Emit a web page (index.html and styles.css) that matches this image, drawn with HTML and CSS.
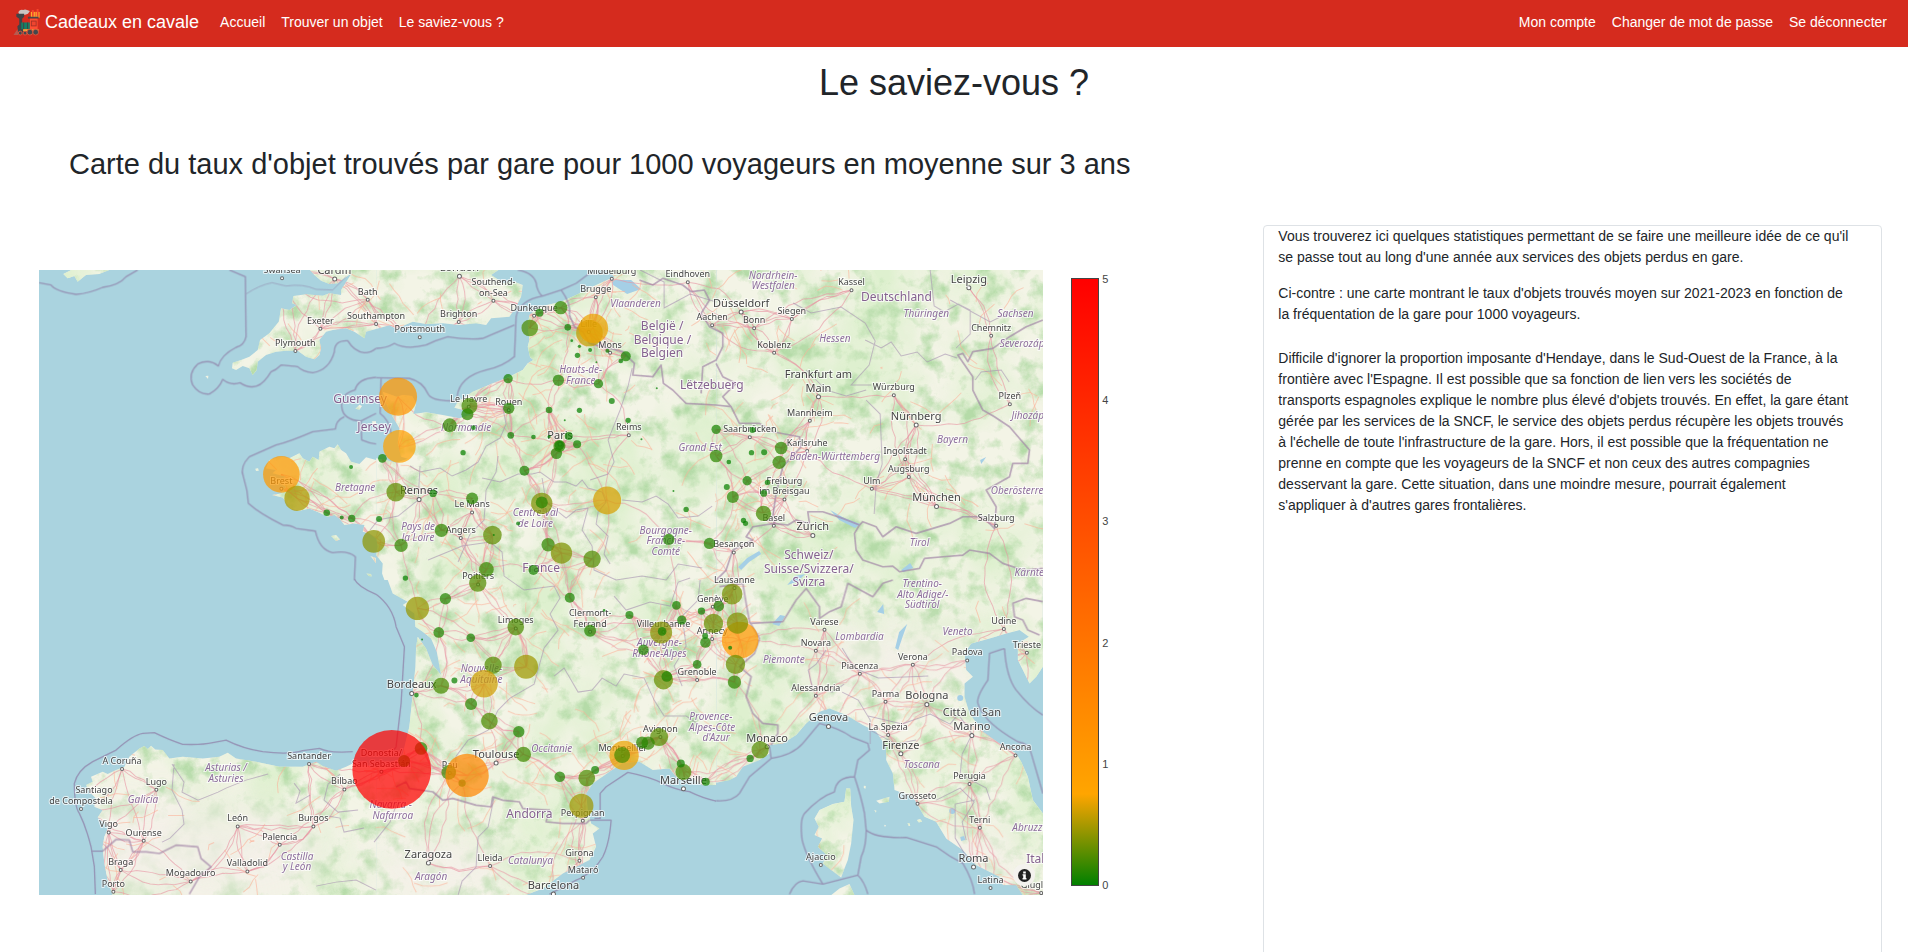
FILE: index.html
```html
<!DOCTYPE html>
<html lang="fr">
<head>
<meta charset="utf-8">
<title>Cadeaux en cavale</title>
<link rel="stylesheet" href="styles.css">
</head>
<body>
<nav class="navbar">
  <a class="brand" href="#">
    <svg class="brand-logo" viewBox="0 0 28 28" aria-hidden="true">
      <path d="M5 3q2-3 5-2 2-1 4 0l3 1-2 3-3 1H6z" fill="#c9c5c3"/>
      <path d="M18 3h9v6h-9z" fill="#ffc32b"/><path d="M19 1h2v7h-2zM22 3h1v5h-1zM24 0h2v8h-2z" fill="#f5442d"/>
      <path d="M3 5h8v3L9 10v6h1v10H5l-1-8 2-2v-6L3 8z" fill="#3f4448"/>
      <path d="M8 14h9v7H8z" fill="#168064"/><path d="M10 14h1v7h-1zM14 14h1v7h-1z" fill="#3f4448"/>
      <path d="M15 8h11v2H15z" fill="#4a4648"/><path d="M17 10h8v11h-8z" fill="#ff4e32"/>
      <path d="M18 12h6v6h-6z" fill="#a83226"/><path d="M19 13h4v4h-4z" fill="#f0452f"/>
      <path d="M10 21h16v2H10z" fill="#f2b13a"/><path d="M4 21L0 27h5z" fill="#b85a50"/>
      <g fill="#44484c" stroke="#d9573e"><circle cx="7" cy="25" r="2"/><circle cx="12" cy="25" r="2"/><circle cx="17" cy="24" r="3"/><circle cx="23" cy="24" r="3"/></g>
    </svg>
    <span>Cadeaux en cavale</span>
  </a>
  <div class="nav-group">
    <a class="nav-link" href="#">Accueil</a>
    <a class="nav-link" href="#">Trouver un objet</a>
    <a class="nav-link" href="#">Le saviez-vous ?</a>
  </div>
  <div class="nav-group nav-account">
    <a class="nav-link" href="#">Mon compte</a>
    <a class="nav-link" href="#">Changer de mot de passe</a>
    <a class="nav-link" href="#">Se déconnecter</a>
  </div>
</nav>
<main class="page">
  <h1 class="page-title">Le saviez-vous ?</h1>
  <h2 class="section-title">Carte du taux d'objet trouvés par gare pour 1000 voyageurs en moyenne sur 3 ans</h2>
  <div class="columns">
    <section class="chart" aria-label="Carte des gares">
      <div class="map">
        <svg class="map-canvas" viewBox="39 270 1004 625" role="img" aria-label="Taux d'objets trouvés par gare">
          <defs>
            <filter id="forest" x="0" y="0" width="1" height="1" color-interpolation-filters="sRGB">
              <feTurbulence type="fractalNoise" baseFrequency="0.05" numOctaves="6" seed="8"/>
              <feColorMatrix values="0 0 0 0 0.71  0 0 0 0 0.86  0 0 0 0 0.66  3 0 0 0 -1.4"/>
            </filter>
            <filter id="plain" x="0" y="0" width="1" height="1" color-interpolation-filters="sRGB">
              <feTurbulence type="fractalNoise" baseFrequency="0.012" numOctaves="4" seed="21"/>
              <feColorMatrix values="0 0 0 0 0.87  0 0 0 0 0.94  0 0 0 0 0.81  0 3 0 0 -1.2"/>
            </filter>
            <filter id="soft"><feGaussianBlur stdDeviation="20"/></filter>
            <g id="land">
              <svg x="36" y="260" width="340" height="320" viewBox="0 0 1020 960">
                <path d="M110 28L82 42 95 55 115 48 125 65 150 45 190 42 225 28z"/>
                <path d="M820 28L835 45 855 62 880 72 905 70 925 55 948 38 930 66 915 90 915 105 880 100 860 107 810 103 772 108 768 130 782 135 760 150 735 145 728 185 712 205 700 220 672 240 665 270 640 290 615 300 590 308 588 325 600 330 620 318 640 325 650 345 662 330 665 305 690 285 720 275 750 272 785 272 810 290 835 298 850 285 855 265 850 240 870 215 890 210 930 205 955 215 985 235 990 215 1020 207V28z"/>
                <path d="M1020 600L990 592 970 612 945 605 930 580 915 570 905 553 895 565 880 560 850 575 848 600 830 590 820 605 800 595 790 580 760 595 735 590 700 600 690 625 720 630 710 640 750 650 725 665 750 680 735 700 708 705 740 712 765 745 790 752 820 745 850 758 875 770 895 765 910 775 925 795 955 790 985 795 980 815 1000 820 1020 835z"/>
                <path d="M885 828l15-3 12 13-12 5zM958 446l12-12 8 4-8 11zM508 348l9-1-1 10zM658 626l8-1 2 7-8 1zM1008 484h12v12h-10zM1003 888l17 6v16zM991 940l14 2 2 7-9-1z"/>
              </svg>
              <svg x="376" y="260" width="340" height="320" viewBox="0 0 1020 960">
                <path d="M0 28V207L40 196 60 206 110 185 150 192 200 190 250 195 300 190 330 195 345 175 400 170 420 140 435 110 440 75 415 65 380 70 360 55 345 45 370 28z"/>
                <path d="M690 28L715 50 660 75 600 105 555 125 490 140 460 165 455 195 460 240 455 260 462 292 472 300 455 310 440 330 400 350 350 370 290 395 245 425 235 443 270 452 287 463 250 475 200 465 150 457 112 462 120 430 108 408 80 405 62 410 20 395 30 430 50 470 70 505 65 550 75 590 95 596 60 608 30 600 0 595V830L5 860 0 885 20 910 18 940 25 960H1020V28z"/>
              </svg>
              <svg x="716" y="260" width="340" height="320" viewBox="0 0 1020 960"><path d="M0 0H1020V960H0z"/></svg>
              <svg x="36" y="580" width="340" height="320" viewBox="0 0 1020 960">
                <path d="M235 960L215 900 205 850 200 800 205 770 218 740 185 712 200 690 175 680 180 655 160 635 150 615 170 605 165 590 200 575 215 582 240 570 265 560 280 530 310 505 325 498 335 507 345 497 358 508 380 510 400 535 440 530 500 535 550 530 575 518 600 535 660 545 730 560 800 560 840 545 860 558 900 572 930 560 950 550 1020 560V960z"/>
              </svg>
              <svg x="376" y="580" width="340" height="320" viewBox="0 0 1020 960">
                <path d="M35 0L50 40 95 65 80 75 115 100 118 140 140 155 165 175 182 215 195 285 170 255 150 205 125 170 120 200 118 260 110 340 100 440 80 520 60 545 0 560V960H410L500 925 560 880 640 840 660 800 650 760 670 745 645 730 635 690 630 640 650 610 700 575 740 548 790 545 830 570 880 565 900 590 950 595 980 615 1020 615V0z"/>
              </svg>
              <svg x="716" y="580" width="340" height="320" viewBox="0 0 1020 960">
                <path d="M0 608L40 600 60 590 80 560 130 540 160 520 160 495 200 490 240 465 270 430 310 395 340 385 390 405 440 435 480 455 510 500 510 540 530 580 535 630 590 650 625 710 660 725 690 775 740 810 780 855 850 890 860 915 900 915 930 960H1020V740L980 700 950 660 935 590 915 545 900 520 850 490 800 455 760 400 745 350 745 310 770 290 750 270 745 220 765 190 820 175 870 160 910 150 938 170 905 190 905 240 940 310 960 290 980 260V0H0z"/>
                <path d="M390 625L402 625 405 680 412 720 405 790 395 840 385 865 375 892 345 870 320 850 332 825 305 800 318 775 295 765 308 740 295 715 310 690 350 672 385 665zM345 945L370 925 400 912 415 945zM480 662L500 656 520 650 518 665 490 670zM602 720l10-3 6 7-10 3zM574 729l7 1 1 8-5-1zM474 690l7 2-2 6zM504 734l6 2-4 5zM443 617l6 1-1 8-5-2z"/>
              </svg>
            </g>
            <mask id="land-mask"><use href="#land" fill="#fff"/></mask>
          </defs>
          <rect class="sea" x="39" y="270" width="1004" height="625"/>
          <use class="land" href="#land"/>
          <g mask="url(#land-mask)">
            <rect x="39" y="270" width="1004" height="625" filter="url(#plain)"/>
            <rect x="39" y="270" width="1004" height="625" filter="url(#forest)"/>
            <g class="dry" filter="url(#soft)">
              <ellipse cx="180" cy="850" rx="150" ry="50"/><ellipse cx="440" cy="865" rx="70" ry="30"/><ellipse cx="890" cy="655" rx="100" ry="25"/><ellipse cx="975" cy="860" rx="40" ry="30"/>
            </g>
            <g class="lakes">
              <path d="M738 567l9-9 12-7 2 3-12 8-8 8zM830 510l14 8 16 6-5 4-16-8zM787 585l8-9 10-2-8 8zM772 624l8-9 5 1-6 10zM895 648l4-16 8-8-5 14-4 12zM877 612l6-8 1 10zM901 570l9-7 3 5-10 4zM957 698a3 3 0 1 0 6 0 3 3 0 1 0-6 0zM949 811a3 3 0 1 0 6 0 3 3 0 1 0-6 0zM960 837l4-1 1 4-4 1zM980 460l6-3-5 7z"/>
              <path d="M611 280l20 0 10 9-14 5-14-9z"/>
            </g>
            <g id="roads"></g>
          </g>
          <g class="region-line">
            <path d="M482 478l18 4 18-8 14 0 8-2 14 10 12 0 10 4 6-6 6 8 14 4 4 10-8 10-2 12 12 12-4 18 6 10M590 480l18-6 6-12-6-22 12-30 8-24 4-18M410 466l10 6 20-4 12 8 14-6 12-8 8-16 14-8 6-14-4-20M420 466l-2 34-20 16-20 4-8 10M498 456l-2 16-10 18-2 30-14 14-12 28M542 478l4 24 20 16 10-8 12-2M622 500l20 2 14-6 12 8 10 14 20-2 14-10M588 508l-6 22 10 16 2 24 22 10 26-4 24 4 12-16 24 4"/>
            <path d="M428 560l34-14 28-4 12 10 2 24 20 14 30-4 6 12-10 16 8 16-14 18-10 36-24 14-12 12-10 20-20 10-12 16-2 22M554 676l10-8 14 24 14-2 10-12 14 8 8-12 20 4 10 22 10 16 22 0 24 16M614 596l12 14 24-8 20 4 8-24 12-4M700 580l-2 20-16 16 4 30-12 20 8 20M494 797l-6 30-10 10-2 30-14 14-4 14M398 800l-8 22-16 20"/>
            <path d="M172 764l12 18-2 10 16 8 20-8 8-4 20-8 22-6M174 764l-2 26 10 20 2 14-14 14-8 4M340 774l-12 10-4 16 14 12 20-2M328 816l12 2 4 14 20-4M294 783l6 8-4 12 14-8M316 886l20-4 20-2 20 10"/>
            <path d="M865 340l16 8 10-6 10 14 16-4 10 10 18-8 12 4M793 303l18 10 30-6 24 16 10 18-6 24-18 20 20 0M866 400l14 14 2 50-6 20-2 30M806 370l20 20 20 6 20-6M930 270l4 36 10 6 14-8 12 6 0 24-14 14M975 380l6-8 20-2 8 12M950 300l40 22 20-10M640 270l24 12 0 26 26-14 26 8"/>
            <path d="M826 650l-10 14-8 6 4 16 20 6 12-8M842 692l16 8 12 20 0 24M868 716l34 8 28-10 20 10 8-10 14 20-10 20-2 20 26 14 4 12M870 730l26 14 20-4M928 676l-50 2-24-10-12-20M936 800l24-12 14 14-12 20 4 18M975 800l-20 4 0 34 12 20"/>
          </g>
          <g class="border">
            <g transform="translate(376 260) scale(.33333)"><path d="M580 165L595 200 620 215 640 250 690 262 740 275 775 310 770 345 830 350 855 315 862 370 890 390 930 430 1020 435 1065 440 1090 490 1150 490 1190 515 1270 530 1275 560 1220 620 1200 700 1190 770 1195 790M790 60L830 75 860 55 920 75 945 95 985 90 1000 120 975 160 1000 200 1040 220 1040 260 1020 300 980 320 975 400M1065 440L1040 410 1080 370 1040 350 1020 310"/></g>
            <g transform="translate(716 260) scale(.33333)"><path d="M175 790L215 795 240 780 280 790 275 755 320 755 380 775 430 795 415 820 420 870 440 900 500 920 530 918 550 935 610 925 625 895 680 890 740 885 760 870 820 880 860 910 920 930 980 925M430 795L440 785 480 800 500 830 540 800 600 820 700 790 740 770 800 770 835 805 840 740 810 690 880 650 890 610 935 610 940 570 880 500 835 470 800 450 770 390 770 350 725 285 740 280 755 305 770 275 830 265 880 230 930 200 980 180M175 790L110 800 90 830 110 840 50 870 30 930 0 960"/></g>
            <g transform="translate(376 580) scale(.33333)"><path d="M60 620L90 605 100 625 170 635 200 660 230 655 300 675 345 680 350 650 380 660 430 665 440 685 520 690 510 725 560 730 630 730 640 720"/></g>
            <g transform="translate(716 580) scale(.33333)"><path d="M10 20L80 10 90 70 100 125 130 175 115 220 70 260 105 290 90 350 110 400 140 430 185 435 185 460 165 495M100 130L200 125 240 60 270 25 310 80 310 115 340 95 375 80 395 10 470 50 500 10 530 0M980 65L930 55 890 70 895 110 920 120 935 150 970 165"/></g>
            <g transform="translate(36 580) scale(.33333)"><path d="M200 813L240 778 280 780 290 815 330 815 370 820 420 795 485 800 495 835 525 860 490 890 460 942"/></g>
          </g>
          <g class="waters">
            <g transform="translate(36 260) scale(.33333)"><path d="M9 68L45 75Q60 95 120 103 160 100 200 82 250 75 270 50L305 30M580 30L628 50 630 230Q625 255 600 262 555 285 547 318 520 295 485 312 455 340 470 375 490 405 520 402 550 385 560 358 585 378 612 368 660 400 695 350L705 335Q720 330 735 315 770 318 785 320 800 335 830 338 880 330 895 275 895 240 935 242 955 275 985 278 1005 278 1020 265M1020 352Q965 355 957 390 915 400 917 440 920 480 975 483L1020 460M925 470Q900 480 898 507L830 515Q760 545 720 555L640 590Q610 620 622 650 635 690 637 730 670 760 740 795 765 795 780 805L838 813Q850 870 890 878 935 870 958 890L955 960M975 485L977 540Q1000 550 1020 552"/><path class="thin" d="M630 102Q670 75 708 68L750 78Q800 70 840 88L890 90 930 50"/></g>
            <g transform="translate(376 260) scale(.33333)"><path d="M0 265Q30 265 55 250 90 270 150 255 180 240 215 230 280 240 320 235 380 210 415 195M425 30Q480 40 482 80 490 105 500 108L555 90Q585 130 580 165M555 90L600 70 640 40M500 108Q430 120 420 170L415 290Q380 320 330 330 250 350 243 410M0 353L100 355Q140 365 155 400 165 425 240 422M15 353L12 460Q40 480 45 520"/></g>
            <g transform="translate(36 580) scale(.33333)"><path d="M178 942L175 860 165 800Q150 740 130 700 115 680 115 610 125 570 170 545L240 510Q290 465 320 460L355 458Q400 480 440 493 500 495 530 488L570 480Q620 505 680 515 760 525 800 512L850 505Q880 520 950 515M955 -3Q965 20 1020 43M165 813H200"/></g>
            <g transform="translate(376 580) scale(.33333)"><path d="M0 43Q50 80 60 140L85 200 75 370 60 500Q50 520 0 520M640 720H705Q700 790 680 830 650 880 600 900L520 942M655 715H672V640L690 620 755 577Q820 590 860 610 900 630 940 635 980 655 1020 663"/></g>
            <g transform="translate(716 580) scale(.33333)"><path d="M0 662Q50 665 70 640L100 590 165 535 160 500M165 535Q230 525 260 490L310 430Q370 445 405 470L455 490 460 510 425 540 415 590Q435 650 445 700L450 750Q450 800 435 830L425 885 320 912Q270 830 258 780 250 720 265 700 310 650 355 635 360 590 415 590M450 750Q480 775 570 772L660 800Q700 830 740 850 770 900 775 942M220 942Q235 905 260 902L320 912M425 885Q445 905 455 942M865 205L820 220 815 300Q780 350 785 370 800 420 880 470L905 485Q940 490 945 520L980 640M865 205Q870 290 900 330 940 380 980 405"/></g>
          </g>
          <g id="labels"></g>
          <g id="stations"></g>
        </svg>
        <button class="map-info" type="button" aria-label="Attribution">
          <svg viewBox="0 0 20 20" aria-hidden="true"><circle cx="10" cy="10" r="10" fill="#222"/><path d="M8 4h4v3H8zM7 8h5v6h1v2H7v-2h1v-4H7z" fill="#fff"/></svg>
        </button>
      </div>
      <div class="scale">
        <div class="scale-bar"></div>
        <div class="scale-ticks"><span>5</span><span>4</span><span>3</span><span>2</span><span>1</span><span>0</span></div>
      </div>
    </section>
    <aside class="card">
      <p class="card-text">Vous trouverez ici quelques statistiques permettant de se faire une meilleure idée de ce qu'il<br>se passe tout au long d'une année aux services des objets perdus en gare.</p>
      <p class="card-text">Ci-contre : une carte montrant le taux d'objets trouvés moyen sur 2021-2023 en fonction de<br>la fréquentation de la gare pour 1000 voyageurs.</p>
      <p class="card-text card-note">Difficile d'ignorer la proportion imposante d'Hendaye, dans le Sud-Ouest de la France, à la<br>frontière avec l'Espagne. Il est possible que sa fonction de lien vers les sociétés de<br>transports espagnoles explique le nombre plus élevé d'objets trouvés. En effet, la gare étant<br>gérée par les services de la SNCF, le service des objets perdus récupère les objets trouvés<br>à l'échelle de toute l'infrastructure de la gare. Hors, il est possible que la fréquentation ne<br>prenne en compte que les voyageurs de la SNCF et non ceux des autres compagnies<br>desservant la gare. Cette situation, dans une moindre mesure, pourrait également<br>s'appliquer à d'autres gares frontalières.</p>
    </aside>
  </div>
</main>
<script src="map.js"></script>
</body>
</html>
```
FILE: styles.css
```css
* { box-sizing: border-box; }
body {
  margin: 0;
  background: #fff;
  color: #212529;
  font-family: "Liberation Sans", Arial, sans-serif;
  font-size: 14px;
  line-height: 21px;
}
.navbar {
  display: flex;
  align-items: center;
  min-height: 47px;
  padding: 0 13px 3px;
  background: #d52b1e;
}
.brand {
  display: flex;
  align-items: center;
  gap: 4px;
  margin-right: 13px;
  color: #fff;
  font-size: 18px;
  line-height: 27px;
  text-decoration: none;
}
.brand-logo { width: 28px; height: 27px; }
.nav-group { display: flex; }
.nav-account { margin-left: auto; }
.nav-link { padding: 7px 8px; color: #fff; text-decoration: none; }
.page { padding: 0 26px; }
.page-title {
  margin: 0;
  padding-top: 14px;
  font-size: 36px;
  font-weight: 400;
  line-height: 43px;
  text-align: center;
}
.section-title {
  margin: 0;
  padding: 43px 43px;
  font-size: 29px;
  font-weight: 400;
  line-height: 35px;
}
.columns { display: grid; grid-template-columns: 2fr 1fr; align-items: start; }
.chart {
  display: flex;
  gap: 28px;
  padding: 45px 155px 45px 13px;
}
.map { position: relative; flex: 1; min-width: 0; }
.map-canvas { display: block; width: 100%; height: auto; }
.sea { fill: #aad3df; }
.land { fill: #f3f4e6; }
.dry { fill: #f4efe9; opacity: .8; }
.lakes { fill: #a5cfe6; }
.road { fill: none; stroke: #e892a2; stroke-width: 1; opacity: .6; }
.road.minor { stroke: #fbb29a; opacity: .6; }
.region-line { fill: none; stroke: #a58fb0; stroke-width: 1; opacity: .6; }
.border { fill: none; stroke: #a184a6; stroke-width: 5; stroke-linejoin: round; opacity: .7; }
.waters { fill: none; stroke: #9289ae; stroke-width: 4; stroke-linejoin: round; opacity: .85; }
.waters .thin { stroke-width: 2; }
.place {
  fill: #444;
  stroke: #fff;
  stroke-opacity: .7;
  stroke-width: 2px;
  paint-order: stroke;
  font-family: "Noto Sans", sans-serif;
  font-size: 9px;
  text-anchor: middle;
}
.place.city { font-size: 11px; }
.place.country { fill: #85628f; font-size: 12px; }
.place.area { fill: #8d6e9c; font-size: 10px; font-style: italic; }
.town { fill: #fff; stroke: #666; stroke-width: 1; }
.map-info {
  position: absolute;
  right: 8px;
  bottom: 9px;
  display: grid;
  place-items: center;
  width: 22px;
  height: 22px;
  padding: 0;
  border: 0;
  border-radius: 11px;
  background: #f4f2ee;
}
.map-info svg { width: 13px; height: 13px; }
.scale { display: flex; gap: 3px; padding: 8px 0 9px; }
.scale-bar {
  width: 28px;
  border: 1px solid #444;
  background: linear-gradient(to top, #008000 0, #ffa500 15%, #f00 100%);
}
.scale-ticks {
  display: flex;
  flex-direction: column;
  justify-content: space-between;
  margin: -5px 0;
  color: #444;
  font-size: 11px;
  line-height: 12px;
}
.card {
  min-height: 100vh;
  padding: 0 14px;
  border: 1px solid #dee2e6;
  border-radius: 4px;
}
.card-text { margin: 0 0 15px; }
.card-note { padding-top: 8px; }
```
FILE: map.js
```js
const NS = "http://www.w3.org/2000/svg";

// Origin of each map tile; positions inside a tile are in thirds of a unit.
const TILES = {
  A: [36, 260], B: [376, 260], C: [716, 260],
  D: [36, 580], E: [376, 580], F: [716, 580]
};

// x, y, radius of each station.
const STATIONS = {
  A: [[736,643,55],[783,715,38],[945,621,6],[872,758,10],[917,772,6],[947,775,11],[1013,844,34]],
  B: [[554,143,20],[490,158,12],[461,204,25],[575,202,10],[587,242,4],[610,259,5],[642,270,6],[604,286,8],[694,272,6],[640,219,40],[652,205,44],[749,289,15],[734,303,7],[661,307,3],[396,356,14],[547,361,17],[667,371,14],[66,410,57],[70,559,49],[280,438,24],[274,463,18],[398,445,17],[221,496,21],[292,503,7],[519,450,10],[610,451,8],[707,423,9],[756,481,8],[566,481,3],[842,385,3],[796,538,3],[404,526,10],[472,531,7],[261,578,8],[550,558,18],[550,556,14],[541,580,17],[603,553,12],[578,528,12],[519,530,5],[19,595,13],[445,632,15],[59,696,28],[171,700,11],[288,715,18],[497,730,32],[497,727,18],[693,721,42],[9,777,9],[196,811,20],[75,856,20],[349,825,28],[353,825,3],[426,790,6],[516,854,20],[556,879,32],[648,897,26],[472,930,15],[331,928,22],[88,954,8],[892,693,3],[930,748,8],[878,838,17],[1000,850,17]],
  C: [[0,508,14],[0,588,19],[109,510,9],[195,564,19],[189,607,20],[106,578,8],[144,577,9],[38,606,7],[93,662,14],[154,667,8],[143,700,10],[32,681,9],[50,711,18],[142,760,23],[82,781,8],[88,790,8]],
  E: [[305,9,26],[208,56,17],[124,85,35],[188,157,16],[284,173,13],[419,141,25],[581,53,15],[642,152,18],[684,91,4],[760,105,12],[901,76,13],[917,120,14],[976,93,11],[1012,130,29],[855,157,33],[858,154,13],[802,209,16],[988,187,16],[987,168,9],[963,253,13],[351,255,26],[450,260,36],[324,311,41],[195,317,24],[235,301,9],[121,345,7],[285,372,18],[340,423,25],[428,455,17],[442,523,23],[862,299,29],[872,289,16],[849,471,27],[816,489,20],[798,487,18],[744,526,44],[738,525,24],[657,570,12],[632,594,25],[551,590,16],[616,677,36],[922,576,24],[914,550,12],[989,605,12],[84,543,18],[135,505,19],[47,568,118],[218,577,22],[258,609,11],[273,586,65],[138,178,3]],
  F: [[48,42,31],[8,78,16],[72,180,55],[64,129,32],[42,203,6],[58,253,29],[55,306,20],[132,509,26],[102,535,11]]
};

// text, centre x, centre y, kind.
const PLACES = {
  A: [["Swansea",738,31],["Cardiff",896,33,"city"],["Bath",995,95],["Exeter",853,182],["Plymouth",778,249],["Southampton",1020,168],["Guernsey",972,421,"country"],["Jersey",1014,503,"country"],["Brest",736,662],["Bretagne",957,684,"area"]],
  B: [["London",250,25,"city"],["Southend-",352,66],["on-Sea",352,98],["Brighton",248,162],["Portsmouth",131,208],["Middelburg",707,32],["Eindhoven",935,43],["Brugge",659,88],["Vlaanderen",778,131,"area"],["Dunkerque",474,143],["België /",858,202,"country"],["Belgique /",859,242,"country"],["Belgien",858,282,"country"],["Lille",638,192],["Mons",702,254],["Aachen",1008,172],["Hauts-de-",614,330,"area"],["France",614,362,"area"],["Lëtzebuerg",1007,377,"country"],["Le Havre",278,416],["Rouen",398,427],["Normandie",270,504,"area"],["Paris",552,528,"city"],["Reims",758,502],["Grand Est",972,565,"area"],["Rennes",129,694,"city"],["Le Mans",288,733],["Centre-Val",478,760,"area"],["de Loire",478,792,"area"],["Pays de",126,802,"area"],["la Loire",126,833,"area"],["Angers",254,810],["Bourgogne-",869,812,"area"],["Franche-",869,843,"area"],["Comté",869,875,"area"],["France",495,927,"country"],["Poitiers",306,949]],
  C: [["Nordrhein-",171,48,"area"],["Westfalen",171,79,"area"],["Düsseldorf",75,132,"city"],["Bonn",114,181],["Siegen",227,153],["Kassel",406,67],["Leipzig",758,59,"city"],["Deutschland",541,114,"country"],["Thüringen",630,163,"area"],["Sachsen",898,162,"area"],["Chemnitz",825,203],["Koblenz",174,254],["Hessen",356,238,"area"],["Severozápad",935,251,"area"],["Frankfurt am",307,345,"city"],["Main",307,386,"city"],["Würzburg",533,382],["Plzeň",881,409],["Nürnberg",600,471,"city"],["Mannheim",281,458],["Jihozápad",952,469,"area"],["Saarbrücken",101,508],["Karlsruhe",273,549],["Bayern",709,541,"area"],["Ingolstadt",567,574],["Baden-Württemberg",356,590,"area"],["Augsburg",578,627],["Ulm",467,662],["Freiburg",205,662],["im Breisgau",205,694],["München",661,715,"city"],["Oberösterreich",922,692,"area"],["Basel",173,773],["Zürich",290,802,"city"],["Salzburg",840,773],["Besançon",53,853],["Schweiz/",278,889,"country"],["Suisse/Svizzera/",278,929,"country"],["Svizra",278,970,"country"],["Tirol",610,849,"area"],["Lausanne",55,960],["Kärnten",948,940,"area"]],
  D: [["A Coruña",258,543],["Lugo",361,605],["Santiago",174,631],["de Compostela",135,663],["Galicia",321,660,"area"],["Vigo",218,733],["Ourense",323,758],["Braga",254,846],["Porto",232,911],["Mogadouro",464,880],["Asturias /",570,565,"area"],["Asturies",570,597,"area"],["Santander",819,528],["León",605,715],["Burgos",832,715],["Palencia",731,770],["Valladolid",634,850],["Castilla",783,830,"area"],["y León",783,861,"area"],["Bilbao",925,604]],
  E: [["Limoges",419,121],["Clermont-",642,99],["Ferrand",642,131],["Villeurbanne",862,132],["Genève",1010,56],["Annecy",1008,153],["Auvergne-",850,189,"area"],["Rhône-Alpes",850,221,"area"],["Nouvelle-",316,268,"area"],["Aquitaine",316,299,"area"],["Bordeaux",107,316,"city"],["Grenoble",963,276],["Avignon",853,447],["Provence-",1004,412,"area"],["Alpes-Côte",1008,443,"area"],["d'Azur",1020,475,"area"],["Montpellier",740,504],["Toulouse",360,525,"city"],["Occitanie",527,508,"area"],["Pau",221,555],["Marseille",922,602,"city"],["Andorra",460,704,"country"],["Perpignan",620,698],["Donostia/",16,520],["San Sebastián",16,551],["Navarra -",44,675,"area"],["Nafarroa",50,707,"area"],["Zaragoza",157,825,"city"],["Lleida",342,834],["Aragón",165,891,"area"],["Catalunya",463,843,"area"],["Girona",610,818],["Mataró",621,869],["Barcelona",532,918,"city"]],
  F: [["Trentino-",618,13,"area"],["Alto Adige/-",620,44,"area"],["Südtirol",618,76,"area"],["Varese",325,125],["Novara",299,188],["Lombardia",430,172,"area"],["Piemonte",203,239,"area"],["Veneto",724,157,"area"],["Udine",863,123],["Trieste",932,194],["Verona",590,230],["Padova",753,217],["Piacenza",431,257],["Alessandria",299,323],["Parma",508,341],["Bologna",632,349,"city"],["Genova",337,415,"city"],["La Spezia",516,441],["Città di San",767,400,"city"],["Marino",767,442,"city"],["Monaco",153,476,"city"],["Ancona",898,502],["Firenze",554,497,"city"],["Toscana",617,555,"area"],["Perugia",760,588],["Grosseto",604,647],["Terni",791,719],["Abruzzo",942,745,"area"],["Roma",772,837,"city"],["Ajaccio",314,831],["Latina",823,900],["Italia",972,840,"country"],["Giugliano",975,915]]
};

// Upper lines of two-line names, which carry no town marker.
const UPPER_LINES = ["Southend-", "Frankfurt am", "Freiburg", "Santiago", "Clermont-", "Donostia/", "Città di San"];

function add(parent, name, attrs, text) {
  const node = document.createElementNS(NS, name);
  for (const key in attrs) node.setAttribute(key, attrs[key]);
  if (text) node.textContent = text;
  parent.appendChild(node);
  return node;
}

function project(tile, x, y) {
  return [TILES[tile][0] + x / 3, TILES[tile][1] + y / 3];
}

// Green at 0, orange at 0.75, red at 5; the disc area follows the value.
function colour(r) {
  const v = 5 * Math.pow(r / 118, 2);
  const t = v < 0.75 ? v / 0.75 : Math.min(1, (v - 0.75) / 4.25);
  return v < 0.75
    ? `rgb(${Math.round(255 * t)},${Math.round(128 + 37 * t)},0)`
    : `rgb(255,${Math.round(165 * (1 - t))},0)`;
}

const labels = document.getElementById("labels");
const nodes = [];
for (const tile in PLACES) {
  for (const [text, tx, ty, kind] of PLACES[tile]) {
    const [x, y] = project(tile, tx, ty);
    const isTown = (!kind || kind === "city") && !UPPER_LINES.includes(text);
    if (isTown) {
      nodes.push([x, y + 8]);
      add(labels, "circle", { class: "town", cx: x, cy: y + 8, r: kind ? 2 : 1.5 });
    }
    add(labels, "text", { class: "place " + (kind || ""), x, y: y + 3 }, text);
  }
}

const stations = document.getElementById("stations");
for (const tile in STATIONS) {
  for (const [tx, ty, r] of STATIONS[tile]) {
    const [x, y] = project(tile, tx, ty);
    if (r > 9) nodes.push([x, y]);
    add(stations, "circle", { cx: x, cy: y, r: r / 3, fill: colour(r), "fill-opacity": 0.72 });
  }
}

// Road network: each town is joined to its nearest neighbours by a winding line.
let seed = 7;
function random() {
  seed = (seed * 16807) % 2147483647;
  return seed / 2147483647 - 0.5;
}
const roads = document.getElementById("roads");
function road(a, b, cls) {
  const length = Math.hypot(b[0] - a[0], b[1] - a[1]);
  const steps = Math.max(2, Math.round(length / 8));
  let d = `M${a[0].toFixed(1)} ${a[1].toFixed(1)}`;
  const bend = random() * length * 0.3;
  for (let i = 1; i <= steps; i++) {
    const t = i / steps;
    const off = i === steps ? 0 : bend * Math.sin(Math.PI * t) + random() * 3;
    const x = a[0] + (b[0] - a[0]) * t - (b[1] - a[1]) / length * off;
    const y = a[1] + (b[1] - a[1]) * t + (b[0] - a[0]) / length * off;
    d += `L${x.toFixed(1)} ${y.toFixed(1)}`;
  }
  add(roads, "path", { class: "road " + cls, d });
}
nodes.forEach((a, i) => {
  const near = nodes
    .map((b, j) => [Math.hypot(b[0] - a[0], b[1] - a[1]), j])
    .filter(([dist, j]) => j !== i && dist > 12 && dist < 110)
    .sort((p, q) => p[0] - q[0])
    .slice(0, 4);
  for (const [, j] of near) road(a, nodes[j], "");
  for (let k = 0; k < 3; k++) {
    const start = [a[0] + random() * 60, a[1] + random() * 60];
    road(start, [start[0] + random() * 70, start[1] + random() * 70], "minor");
  }
});
```
